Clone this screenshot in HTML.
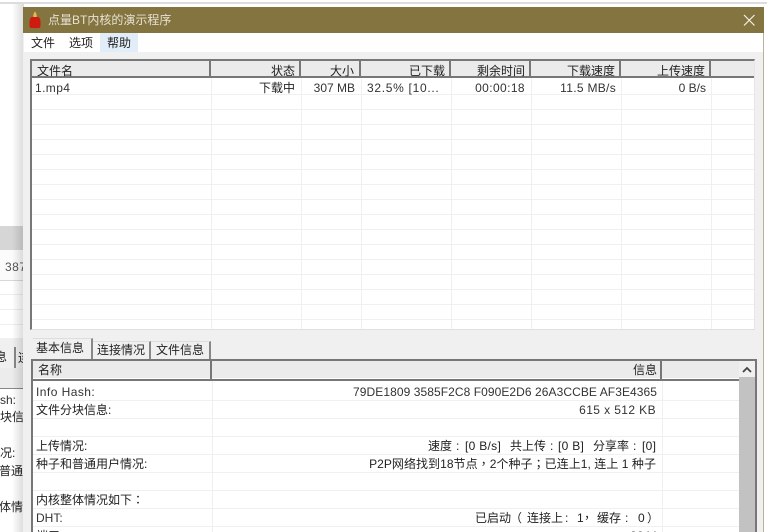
<!DOCTYPE html>
<html><head><meta charset="utf-8">
<style>
html,body{margin:0;padding:0;width:767px;height:532px;overflow:hidden;background:#fff}
body{position:relative;font-family:"Liberation Sans","Noto Sans CJK SC",sans-serif;font-size:12px;color:#222}
.a{position:absolute}
.t{position:absolute;white-space:nowrap;line-height:16px;height:16px}
.r{text-align:right}
.h{background:#ebebeb;}
.hl{position:absolute;width:2px;background:#777}
.gl{position:absolute;left:0;height:1px;background:#f0f0f0}
.gv{position:absolute;width:1px;background:#f0f0f0}
.p{font-family:"Noto Sans CJK TC",sans-serif}
</style></head><body>
<!-- background app remnants -->
<div class="a" style="left:0;top:2px;width:767px;height:2px;background:#dcdcdc"></div>
<div class="a" style="left:0;top:226px;width:23px;height:24px;background:#d6d6d6"></div>
<div class="a" style="left:0;top:250px;width:23px;height:30px;background:#fbfbfb"></div>
<div class="a" style="left:0;top:280px;width:23px;height:1px;background:#d8d8d8"></div>
<div class="t" style="left:5px;top:259px;color:#555;letter-spacing:.5px;width:18px;overflow:hidden">387</div>
<div class="a" style="left:0;top:294px;width:23px;height:1px;background:#eee"></div>
<div class="a" style="left:0;top:309px;width:23px;height:1px;background:#eee"></div>
<div class="a" style="left:0;top:324px;width:23px;height:1px;background:#eee"></div>
<div class="a" style="left:0;top:338px;width:23px;height:30px;background:#f0f0f0"></div>
<div class="a" style="left:0;top:368px;width:23px;height:20px;background:#ececec"></div>
<div class="a" style="left:0;top:388px;width:23px;height:1px;background:#888"></div>
<div class="a" style="left:14px;top:347px;width:2px;height:21px;background:#888"></div>
<div class="a" style="left:0;top:349px;width:14px;height:18px;overflow:hidden"><div class="t" style="left:-5px;top:0">息</div></div>
<div class="a" style="left:18px;top:350px;width:5px;height:18px;overflow:hidden"><div class="t" style="left:0;top:0">连</div></div>
<div class="t" style="left:0;top:392px;width:23px;overflow:hidden;color:#333">sh:</div>
<div class="t" style="left:0;top:409px;width:23px;overflow:hidden">块信息</div>
<div class="t" style="left:0;top:445px;width:23px;overflow:hidden">况:</div>
<div class="t" style="left:-1px;top:463px;width:24px;overflow:hidden">普通用</div>
<div class="t" style="left:-1px;top:499px;width:24px;overflow:hidden">体情况</div>
<!-- shadow -->
<div class="a" style="left:12px;top:4px;width:12px;height:528px;background:linear-gradient(90deg,rgba(0,0,0,0),rgba(0,0,0,.14))"></div>
<!-- window -->
<div class="a" style="left:23px;top:7px;width:740px;height:525px;background:#f0f0f0;border-right:1px solid #b9b29a"></div>
<div class="a" style="left:23px;top:7px;width:741px;height:26px;background:#84743f"></div>
<svg class="a" style="left:28px;top:11px" width="14" height="18" viewBox="0 0 14 18"><path d="M7 0.5C8.5 2.5 9 4 8.6 6H5.4C5 4 5.5 2.5 7 0.5Z" fill="#e8b94a"/><path d="M3.5 6H10.5C12 7 12.5 9 12.5 11V15C12.5 16.5 11.5 17 10 17H4C2.5 17 1.5 16.5 1.5 15V11C1.5 9 2 7 3.5 6Z" fill="#cf1a10"/></svg>
<div class="t" style="left:48px;top:12px;color:#e6e2d2;font-size:12px">点量BT内核的演示程序</div>
<svg class="a" style="left:742px;top:13px" width="14" height="14"><path d="M2 2L12.5 12.5M12.5 2L2 12.5" stroke="#f4f2ea" stroke-width="1.2" fill="none"/></svg>
<!-- menu -->
<div class="a" style="left:24px;top:33px;width:739px;height:19px;background:#fff"></div>
<div class="a" style="left:100px;top:33px;width:38px;height:19px;background:#e1eef9"></div>
<div class="t" style="left:31px;top:35px">文件</div>
<div class="t" style="left:69px;top:35px">选项</div>
<div class="t" style="left:107px;top:35px">帮助</div>
<!-- list -->
<div class="a" id="list" style="left:30px;top:59px;width:725px;height:271px;background:#fff;border-top:2px solid #777;border-left:2px solid #777;box-sizing:border-box;border-right:1px solid #e6e6e6;border-bottom:1px solid #e0e0e0">
<div class="a h" style="left:0;top:0;width:722px;height:15px"></div>
<div class="a" style="left:0;top:15px;width:722px;height:2px;background:#777"></div>
<div class="gl" style="top:33px;width:722px"></div><div class="gl" style="top:48px;width:722px"></div><div class="gl" style="top:63px;width:722px"></div><div class="gl" style="top:78px;width:722px"></div><div class="gl" style="top:93px;width:722px"></div><div class="gl" style="top:108px;width:722px"></div><div class="gl" style="top:123px;width:722px"></div><div class="gl" style="top:138px;width:722px"></div><div class="gl" style="top:153px;width:722px"></div><div class="gl" style="top:168px;width:722px"></div><div class="gl" style="top:183px;width:722px"></div><div class="gl" style="top:198px;width:722px"></div><div class="gl" style="top:213px;width:722px"></div><div class="gl" style="top:228px;width:722px"></div><div class="gl" style="top:243px;width:722px"></div><div class="gl" style="top:258px;width:722px"></div>
<div class="gv" style="left:179px;top:17px;height:251px"></div><div class="gv" style="left:269px;top:17px;height:251px"></div><div class="gv" style="left:329px;top:17px;height:251px"></div><div class="gv" style="left:419px;top:17px;height:251px"></div><div class="gv" style="left:499px;top:17px;height:251px"></div><div class="gv" style="left:589px;top:17px;height:251px"></div><div class="gv" style="left:679px;top:17px;height:251px"></div>
<div class="hl" style="left:177px;top:0;height:15px"></div><div class="hl" style="left:267px;top:0;height:15px"></div><div class="hl" style="left:327px;top:0;height:15px"></div><div class="hl" style="left:417px;top:0;height:15px"></div><div class="hl" style="left:497px;top:0;height:15px"></div><div class="hl" style="left:587px;top:0;height:15px"></div><div class="hl" style="left:677px;top:0;height:15px"></div>
</div>
<div class="t" style="left:37px;top:63px">文件名</div>
<div class="t r" style="left:210px;width:85px;top:63px">状态</div>
<div class="t r" style="left:300px;width:54px;top:63px">大小</div>
<div class="t r" style="left:360px;width:85px;top:63px">已下载</div>
<div class="t r" style="left:450px;width:75px;top:63px">剩余时间</div>
<div class="t r" style="left:530px;width:85px;top:63px">下载速度</div>
<div class="t r" style="left:620px;width:85px;top:63px">上传速度</div>
<div class="t" style="left:35px;top:80px;color:#333;letter-spacing:.4px">1.mp4</div>
<div class="t r" style="left:210px;width:85px;top:80px">下载中</div>
<div class="t r" style="left:300px;width:55px;top:80px;color:#333">307 MB</div>
<div class="t" style="left:367px;top:80px;color:#333;letter-spacing:.7px">32.5% [10...</div>
<div class="t r" style="left:450px;width:75px;top:80px;color:#333;letter-spacing:.4px">00:00:18</div>
<div class="t r" style="left:530px;width:86px;top:80px;color:#333;letter-spacing:.3px">11.5 MB/s</div>
<div class="t r" style="left:620px;width:86px;top:80px;color:#333">0 B/s</div>
<!-- tabs -->
<div class="a" style="left:33px;top:338px;width:58px;height:22px;background:#f0f0f0;border-right:2px solid #888;border-top:1px solid #ddd"></div>
<div class="a" style="left:93px;top:341px;width:56px;height:19px;background:#f0f0f0;border-right:2px solid #888;border-top:1px solid #ddd"></div>
<div class="a" style="left:151px;top:341px;width:58px;height:19px;background:#f0f0f0;border-right:2px solid #888;border-top:1px solid #ddd"></div>
<div class="t" style="left:36px;top:340px">基本信息</div>
<div class="t" style="left:97px;top:342px">连接情况</div>
<div class="t" style="left:156px;top:342px">文件信息</div>
<!-- detail -->
<div class="a" style="left:31px;top:359px;width:726px;height:173px;background:#fff;border-top:2px solid #777;border-left:2px solid #777;border-right:2px solid #777;box-sizing:border-box;overflow:hidden">
<div class="a h" style="left:0;top:0;width:706px;height:17px"></div>
<div class="a" style="left:0;top:18px;width:706px;height:2px;background:#777"></div>
<div class="hl" style="left:177px;top:0;height:18px"></div>
<div class="hl" style="left:627px;top:0;height:18px"></div>
<div class="gl" style="top:39px;width:706px"></div><div class="gl" style="top:57px;width:706px"></div><div class="gl" style="top:75px;width:706px"></div><div class="gl" style="top:93px;width:706px"></div><div class="gl" style="top:111px;width:706px"></div><div class="gl" style="top:129px;width:706px"></div><div class="gl" style="top:147px;width:706px"></div><div class="gl" style="top:165px;width:706px"></div>
<div class="gv" style="left:179px;top:20px;height:160px"></div><div class="gv" style="left:629px;top:20px;height:160px"></div>
<div class="a" style="left:706px;top:0;width:17px;height:16px;background:#f0f0f0"></div>
<div class="a" style="left:706px;top:16px;width:17px;height:160px;background:#c2c2c2"></div>
<svg class="a" style="left:708px;top:4px" width="12" height="10"><path d="M2 7L6 3L10 7" stroke="#444" stroke-width="1.8" fill="none"/></svg>
</div>
<div class="t" style="left:38px;top:362px">名称</div>
<div class="t r" style="left:212px;width:445px;top:362px">信息</div>
<div class="t" style="left:36px;top:384px;color:#333;letter-spacing:.45px">Info Hash:</div>
<div class="t" style="left:36px;top:402px">文件分块信息:</div>
<div class="t" style="left:36px;top:438px">上传情况:</div>
<div class="t" style="left:36px;top:456px">种子和普通用户情况:</div>
<div class="t" style="left:36px;top:492px">内核整体情况如下<span class="p">：</span></div>
<div class="t" style="left:36px;top:510px;color:#333">DHT:</div>
<div class="t" style="left:36px;top:528px">端口</div>
<div class="t r" style="left:212px;width:445px;top:384px;color:#333;letter-spacing:.07px">79DE1809 3585F2C8 F090E2D6 26A3CCBE AF3E4365</div>
<div class="t r" style="left:212px;width:444px;top:402px;color:#333;letter-spacing:.4px">615 x 512 KB</div>
<!-- upload line -->
<div class="t" style="left:428px;top:438px">速度</div>
<div class="t" style="left:456px;top:438px">:</div>
<div class="t" style="left:465px;top:438px;letter-spacing:.3px">[0 B/s]</div>
<div class="t" style="left:510px;top:438px">共上传</div>
<div class="t" style="left:550px;top:438px">:</div>
<div class="t" style="left:558px;top:438px;letter-spacing:.3px">[0 B]</div>
<div class="t" style="left:593px;top:438px">分享率</div>
<div class="t" style="left:633px;top:438px">:</div>
<div class="t" style="left:642px;top:438px;letter-spacing:.3px">[0]</div>
<div class="t r" style="left:212px;width:444px;top:456px;letter-spacing:.05px">P2P网络找到18节点<span class="p">，</span>2个种子<span class="p">；</span>已连上1, 连上 1 种子</div>
<!-- DHT line -->
<div class="t" style="left:475px;top:510px">已启动</div>
<div class="t p" style="left:510px;top:510px">（</div>
<div class="t" style="left:527px;top:510px">连接上</div>
<div class="t" style="left:565px;top:510px">:</div>
<div class="t" style="left:577px;top:510px">1</div>
<div class="t p" style="left:581px;top:510px">，</div>
<div class="t" style="left:597px;top:510px">缓存</div>
<div class="t" style="left:625px;top:510px">:</div>
<div class="t" style="left:638px;top:510px">0</div>
<div class="t p" style="left:647px;top:510px">）</div>
<div class="t r" style="left:212px;width:445px;top:528px;color:#333">8844</div>
</body></html>
